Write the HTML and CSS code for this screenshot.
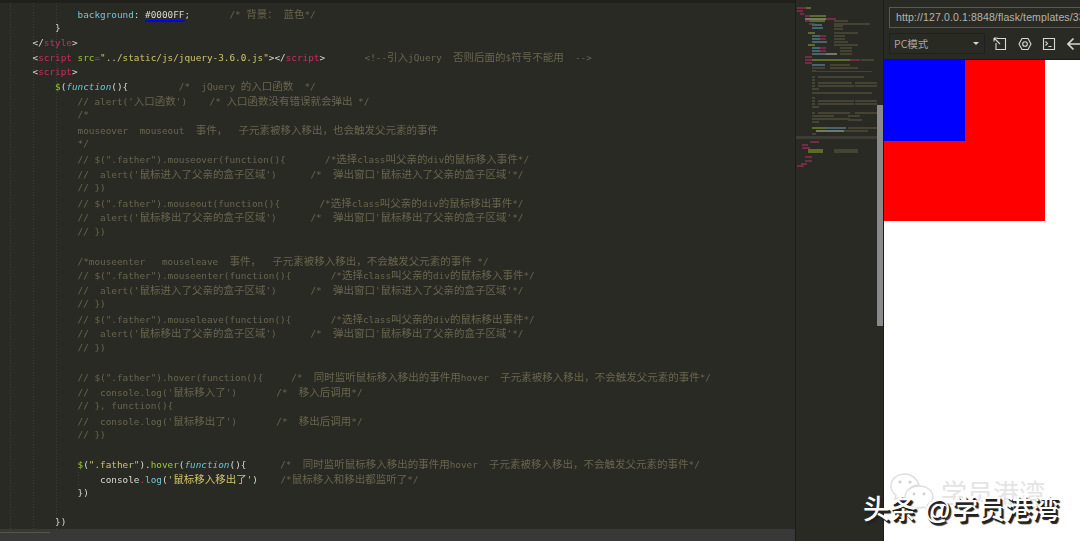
FILE: index.html
```html
<!DOCTYPE html>
<html lang="zh">
<head>
<meta charset="utf-8">
<title>HBuilderX</title>
<link rel="stylesheet" href="styles.css">
</head>
<body>
<div class="app">
  <section class="editor">
    <div class="topbar"></div>
    <div class="code">
<div class="l">            <span class="b">background</span>: <span class="hex">#0000FF</span>;       <span class="c">/* <i>背景：</i> <i>蓝色</i>*/</span></div>
<div class="l">        }</div>
<div class="l">    &lt;/<span class="p">style</span>&gt;</div>
<div class="l">    &lt;<span class="p">script</span> <span class="g">src</span><span class="p">=</span><span class="y">"../static/js/jquery-3.6.0.js"</span>&gt;&lt;/<span class="p">script</span>&gt;       <span class="c">&lt;!--<i>引入</i>jQuery  <i>否则后面的</i>$<i>符号不能用</i>  --&gt;</span></div>
<div class="l">    &lt;<span class="p">script</span>&gt;</div>
<div class="l">        <span class="g">$</span>(<span class="f">function</span>(){         <span class="c">/*  jQuery <i>的入口函数</i>  */</span></div>
<div class="l c">            // alert('<i>入口函数</i>')    /* <i>入口函数没有错误就会弹出</i> */</div>
<div class="l c">            /*</div>
<div class="l c">            mouseover  mouseout  <i>事件，</i>  <i>子元素被移入移出，也会触发父元素的事件</i></div>
<div class="l c">            */</div>
<div class="l c">            // $(".father").mouseover(function(){       /*<i>选择</i>class<i>叫父亲的</i>div<i>的鼠标移入事件</i>*/</div>
<div class="l c">            //  alert('<i>鼠标进入了父亲的盒子区域</i>')      /*  <i>弹出窗口</i>'<i>鼠标进入了父亲的盒子区域</i>'*/</div>
<div class="l c">            // })</div>
<div class="l c">            // $(".father").mouseout(function(){       /*<i>选择</i>class<i>叫父亲的</i>div<i>的鼠标移出事件</i>*/</div>
<div class="l c">            //  alert('<i>鼠标移出了父亲的盒子区域</i>')      /*  <i>弹出窗口</i>'<i>鼠标移出了父亲的盒子区域</i>'*/</div>
<div class="l c">            // })</div>
<div class="l"> </div>
<div class="l c">            /*mouseenter   mouseleave  <i>事件，</i>  <i>子元素被移入移出，不会触发父元素的事件</i> */</div>
<div class="l c">            // $(".father").mouseenter(function(){       /*<i>选择</i>class<i>叫父亲的</i>div<i>的鼠标移入事件</i>*/</div>
<div class="l c">            //  alert('<i>鼠标进入了父亲的盒子区域</i>')      /*  <i>弹出窗口</i>'<i>鼠标进入了父亲的盒子区域</i>'*/</div>
<div class="l c">            // })</div>
<div class="l c">            // $(".father").mouseleave(function(){       /*<i>选择</i>class<i>叫父亲的</i>div<i>的鼠标移出事件</i>*/</div>
<div class="l c">            //  alert('<i>鼠标移出了父亲的盒子区域</i>')      /*  <i>弹出窗口</i>'<i>鼠标移出了父亲的盒子区域</i>'*/</div>
<div class="l c">            // })</div>
<div class="l"> </div>
<div class="l c">            // $(".father").hover(function(){     /*  <i>同时监听鼠标移入移出的事件用</i>hover  <i>子元素被移入移出，不会触发父元素的事件</i>*/</div>
<div class="l c">            //  console.log('<i>鼠标移入了</i>')       /*  <i>移入后调用</i>*/</div>
<div class="l c">            // }, function(){</div>
<div class="l c">            //  console.log('<i>鼠标移出了</i>')       /*  <i>移出后调用</i>*/</div>
<div class="l c">            // })</div>
<div class="l"> </div>
<div class="l">            <span class="g">$</span>(<span class="y">".father"</span>).<span class="g">hover</span>(<span class="f">function</span>(){      <span class="c">/*  <i>同时监听鼠标移入移出的事件用</i>hover  <i>子元素被移入移出，不会触发父元素的事件</i>*/</span></div>
<div class="l guide">                console<span class="p">.</span><span class="b">log</span>(<span class="y">'<i>鼠标移入移出了</i>'</span>)    <span class="c">/*<i>鼠标移入和移出都监听了</i>*/</span></div>
<div class="l">            })</div>
<div class="l"> </div>
<div class="l">        })</div>
    </div>
    <div class="status"><span class="status-mark"></span></div>
  </section>

  <aside class="minimap">
    <svg class="map" width="81" height="170" viewBox="796 0 81 170" aria-hidden="true">
      <rect class="mh" x="796" y="136" width="81" height="3"/>
      <g class="mp">
        <rect x="797" y="7" width="9" height="2"/><rect x="797" y="10" width="6" height="2"/><rect x="800" y="13" width="4" height="2"/>
        <rect x="805" y="15" width="5" height="2"/><rect x="805" y="18" width="5" height="2"/><rect x="826" y="18" width="10" height="2"/><rect x="805" y="20" width="5" height="2"/>
        <rect x="809" y="23" width="6" height="2"/><rect x="820" y="35" width="6" height="2"/><rect x="820" y="38" width="6" height="2"/><rect x="820" y="47" width="6" height="2"/><rect x="820" y="50" width="6" height="2"/>
        <rect x="805" y="56" width="7" height="2"/><rect x="805" y="59" width="7" height="2"/><rect x="850" y="59" width="10" height="2"/><rect x="805" y="62" width="7" height="2"/>
        <rect x="810" y="141" width="9" height="2"/><rect x="802" y="144" width="6" height="2"/><rect x="802" y="147" width="8" height="2"/><rect x="805" y="156" width="7" height="2"/><rect x="805" y="160" width="7" height="2"/><rect x="801" y="163" width="6" height="2"/><rect x="797" y="165" width="7" height="2"/>
      </g>
      <g class="mg">
        <rect x="806" y="7" width="5" height="2"/><rect x="810" y="15" width="16" height="2"/><rect x="810" y="20" width="15" height="2"/><rect x="808" y="32" width="7" height="2"/><rect x="808" y="44" width="7" height="2"/><rect x="812" y="59" width="38" height="2"/><rect x="808" y="149" width="15" height="2"/><rect x="808" y="151" width="15" height="2"/>
        <rect x="812" y="127" width="14" height="2"/>
      </g>
      <g class="mb">
        <rect x="812" y="24" width="10" height="2"/><rect x="812" y="27" width="11" height="2"/><rect x="812" y="35" width="8" height="2"/><rect x="812" y="38" width="8" height="2"/><rect x="812" y="41" width="15" height="2"/><rect x="812" y="47" width="8" height="2"/><rect x="812" y="50" width="8" height="2"/><rect x="812" y="53" width="14" height="2"/><rect x="812" y="64" width="13" height="2"/><rect x="826" y="127" width="20" height="2"/>
      </g>
      <g class="mw">
        <rect x="805" y="18" width="21" height="2"/><rect x="826" y="53" width="11" height="2"/><rect x="816" y="130" width="30" height="2"/>
      </g>
      <g class="mc">
        <rect x="834" y="20" width="14" height="2"/><rect x="834" y="23" width="36" height="2"/><rect x="834" y="25" width="9" height="2"/><rect x="834" y="28" width="9" height="2"/><rect x="834" y="32" width="24" height="2"/><rect x="834" y="35" width="11" height="2"/><rect x="834" y="38" width="11" height="2"/><rect x="834" y="41" width="14" height="2"/><rect x="834" y="44" width="24" height="2"/><rect x="840" y="47" width="12" height="2"/><rect x="840" y="50" width="12" height="2"/><rect x="840" y="53" width="12" height="2"/>
        <rect x="861" y="59" width="13" height="2"/><rect x="830" y="64" width="20" height="2"/><rect x="812" y="67" width="13" height="2"/><rect x="830" y="67" width="28" height="2"/><rect x="812" y="70" width="4" height="2"/><rect x="812" y="71" width="60" height="1"/>
        <rect x="812" y="76" width="3" height="2"/><rect x="818" y="76" width="46" height="2"/><rect x="812" y="79" width="3" height="2"/>
        <rect x="812" y="82" width="3" height="2"/><rect x="818" y="82" width="34" height="2"/><rect x="855" y="82" width="22" height="2"/>
        <rect x="812" y="85" width="3" height="2"/><rect x="818" y="85" width="36" height="2"/><rect x="855" y="85" width="22" height="2"/><rect x="812" y="88" width="7" height="2"/>
        <rect x="812" y="92" width="60" height="2"/><rect x="812" y="97" width="3" height="2"/><rect x="812" y="100" width="3" height="2"/><rect x="818" y="100" width="36" height="2"/><rect x="855" y="100" width="22" height="2"/>
        <rect x="812" y="103" width="3" height="2"/><rect x="818" y="103" width="36" height="2"/><rect x="855" y="103" width="22" height="2"/><rect x="812" y="106" width="7" height="2"/>
        <rect x="812" y="112" width="3" height="2"/><rect x="818" y="112" width="32" height="2"/><rect x="855" y="112" width="22" height="2"/>
        <rect x="812" y="115" width="22" height="2"/><rect x="848" y="115" width="12" height="2"/><rect x="812" y="118" width="38" height="2"/>
        <rect x="848" y="119" width="14" height="2"/><rect x="812" y="121" width="7" height="2"/>
        <rect x="848" y="127" width="29" height="2"/><rect x="844" y="130" width="24" height="2"/><rect x="812" y="133" width="4" height="2"/>
        <rect x="834" y="149" width="24" height="2"/><rect x="834" y="151" width="24" height="2"/>
      </g>
    </svg>
    <div class="thumb"></div>
  </aside>

  <section class="preview">
    <div class="toolbar">
      <div class="url">http://127.0.0.1:8848/flask/templates/33</div>
      <div class="tools">
        <div class="select"><span>PC模式</span><b class="caret"></b></div>
        <svg class="icon" width="14" height="14" viewBox="0 0 14 14"><path d="M4 1.5H12.5V12.5H3V6M1 1L7 7M1 1V4.5M1 1H4.5"/></svg>
        <svg class="icon" width="14" height="14" viewBox="0 0 14 14"><path d="M4 1.5H10L13 7L10 12.5H4L1 7Z"/><circle cx="7" cy="7" r="2.3"/></svg>
        <svg class="icon" width="14" height="14" viewBox="0 0 14 14"><path d="M1.5 1.5H12.5V12.5H1.5ZM3.5 4.5L5.5 6.5L3.5 8.5M6.5 9.5H9.5"/></svg>
        <svg class="icon arrow" width="14" height="14" viewBox="0 0 14 14"><path d="M1 7H14M6.5 1.5L1 7L6.5 12.5"/></svg>
      </div>
    </div>
    <div class="page">
      <div class="father"><div class="son"></div></div>
    </div>
  </section>
</div>

<svg class="wechat" width="46" height="40" viewBox="0 0 46 40" aria-hidden="true">
  <path d="M16 2C8 2 2 7 2 14C2 18 4 21 7 23L6 27L11 25C13 26 15 26 17 26C16 18 23 13 30 13C28 6 22 2 16 2Z"/>
  <path d="M30 14C22 14 16 19 16 25C16 31 22 36 30 36C32 36 33 36 35 35L39 38L38 33C41 31 44 28 44 25C44 19 38 14 30 14Z"/>
  <circle cx="11" cy="10" r="1.6"/><circle cx="21" cy="10" r="1.6"/><circle cx="25" cy="22" r="1.4"/><circle cx="35" cy="22" r="1.4"/>
</svg>
<div class="wm-name">学员港湾</div>
<div class="wm-top">头条 @学员港湾</div>
</body>
</html>
```
FILE: styles.css
```css
* { box-sizing: border-box; }
html, body { margin: 0; height: 541px; overflow: hidden; background: #2a2a24; }
.app { display: flex; width: 1080px; height: 541px; }

.editor { width: 796px; flex: none; display: flex; flex-direction: column; border-right: 1px solid #1b1b18; }
.topbar { height: 3px; background: #1f1f1c; flex: none; }
.code {
  flex: 1;
  padding: 3.7px 0 0 10px;
  overflow: hidden;
  font-family: "DejaVu Sans Mono", "Noto Sans CJK SC", monospace;
  font-size: 9.35px;
  color: #d8d8d0;
  background-color: #2a2a24;
  background-image:
    repeating-linear-gradient(to bottom, #3f3f36 0 1px, transparent 1px 3px),
    repeating-linear-gradient(to bottom, #3f3f36 0 1px, transparent 1px 3px),
    repeating-linear-gradient(to bottom, #3f3f36 0 1px, transparent 1px 3px);
  background-size: 1px 100%;
  background-position: 10px 0, 33px 0, 56px 0;
  background-repeat: no-repeat;
  filter: blur(.3px);
}
.l { height: 14.54px; line-height: 14.54px; white-space: pre; }
.l i { font-style: normal; font-family: "Noto Sans CJK SC", sans-serif; font-size: 10.5px; }
.guide { background: repeating-linear-gradient(to bottom, #3f3f36 0 1px, transparent 1px 3px) 68px 0 / 1px 100% no-repeat; }
.c { color: #69654f; }
.p { color: #d02a66; }
.g { color: #9ccc2e; }
.y { color: #cfc56c; }
.b { color: #74c3d8; }
.f { color: #62c6da; font-style: italic; }
.hex { text-decoration: underline; text-decoration-color: #0000ff; text-decoration-thickness: 1.5px; text-underline-offset: 2px; }

.status { height: 12px; flex: none; background: #383838; }
.status-mark { display: block; width: 50px; height: 1px; margin-top: 3px; background: #55554c; }

.minimap { width: 88px; flex: none; position: relative; background: #2a2a24; border-right: 1px solid #1b1b18; }
.map { display: block; opacity: .62; filter: blur(.4px); }
.mh { fill: #4a4a42; }
.mp rect { fill: #a52a58; }
.mg rect { fill: #7d9530; }
.mb rect { fill: #5b8a9a; }
.mw rect { fill: #a5a5a0; }
.mc rect { fill: #55533f; }
.thumb { position: absolute; left: 81px; top: 105px; width: 6px; height: 221px; background: #8a8a8a; }

.preview { flex: 1; min-width: 0; display: flex; flex-direction: column; }
.toolbar { height: 60px; flex: none; padding: 7px 0 0 5px; background: #2a2a24; overflow: hidden; border-bottom: 1px solid #1b1b18; }
.url {
  height: 21px;
  width: 200px;
  padding-left: 6px;
  border: 1px solid #5a5a52;
  font: 10.5px/19px "Liberation Sans", sans-serif;
  letter-spacing: .12px;
  color: #b4b4ac;
  white-space: nowrap;
  overflow: hidden;
}
.tools { display: flex; align-items: center; margin-top: 5px; }
.select {
  width: 96px;
  height: 21px;
  flex: none;
  padding: 0 4px;
  display: flex;
  align-items: center;
  justify-content: space-between;
  border: 1px solid #1f1f2c;
  font: 10.5px "Noto Sans CJK SC", sans-serif;
  color: #a8a8a0;
}
.caret { width: 0; height: 0; margin-right: 1px; border: 3px solid transparent; border-top: 3px solid #d8d8d0; border-bottom: 0; }
.icon { flex: none; margin-left: 10.5px; fill: none; stroke: #d8d8d0; stroke-width: 1.1; }
.icon:first-of-type { margin-left: 8px; }
.arrow { stroke-width: 1.6; }
.page { flex: 1; background: #fff; }
.father { width: 161px; height: 161px; background: #f00; }
.son { width: 81px; height: 81px; background: #00f; }

.wechat { position: absolute; left: 889px; top: 472px; fill: #fff; stroke: #dedede; stroke-width: 1.4; }
.wechat circle { fill: #d0d0d0; stroke: none; }
.wm-name {
  position: absolute; left: 941px; top: 477px;
  font: 26px/30px "Noto Sans CJK SC", sans-serif;
  color: #e4e4e4;
  white-space: nowrap;
}
.wm-top {
  position: absolute; left: 863px; top: 494px;
  font: 500 26.8px/32px "Liberation Sans", "Noto Sans CJK SC", sans-serif;
  color: #fff;
  text-shadow: 1.5px 1.5px 0 #222, 2.5px 2.5px 1px #222;
  white-space: nowrap;
}
```
